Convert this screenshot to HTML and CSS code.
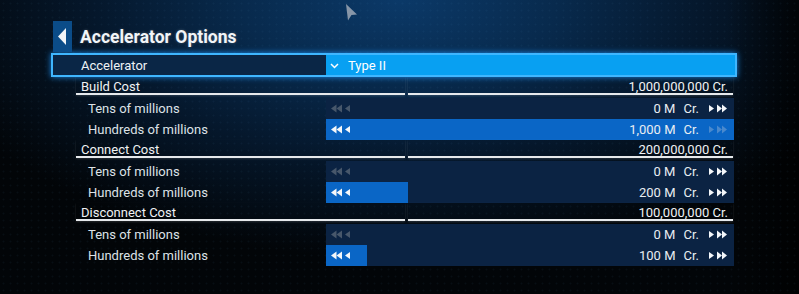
FILE: index.html
```html
<!DOCTYPE html>
<html lang="en">
<head>
    <meta charset="UTF-8">
    <title>Accelerator Options</title>
    <link rel="stylesheet" href="styles.css">
</head>
<body>
    <div class="screen">
        <svg class="cursor" width="12" height="17" viewBox="0 0 12 17">
            <polygon points="0,0 11,10.5 5.5,11 2,16.5" fill="#8796a8"/>
        </svg>

        <div class="panel">
            <div class="title-bar">
                <div class="back">
                    <svg width="9" height="17" viewBox="0 0 9 17"><polygon points="0,8.5 8,0 8,17" fill="#f2f5f8"/></svg>
                </div>
                <h1>Accelerator Options</h1>
            </div>

            <div class="select-row">
                <div class="select-label">Accelerator</div>
                <div class="select-value">
                    <svg width="9" height="6" viewBox="0 0 9 6"><polyline points="1,1 4.5,4.5 8,1" fill="none" stroke="#ffffff" stroke-width="1.5"/></svg>
                    <span>Type II</span>
                </div>
            </div>

            <!-- Build cost -->
            <div class="group">
                <div class="group-head">
                    <span class="head-label">Build Cost</span>
                    <span class="head-value">1,000,000,000 Cr.</span>
                </div>
                <div class="slider-row">
                    <div class="slider-label">Tens of millions</div>
                    <div class="slider" style="--fill: 0%">
                        <svg class="arrows dim" width="19" height="9" viewBox="0 0 19 9"><polygon points="0,4.5 5.5,0.5 5.5,8.5"/><polygon points="5.5,4.5 11,0.5 11,8.5"/><polygon points="14,4.5 19,1 19,8"/></svg>
                        <span class="value">0 M</span>
                        <span class="unit">Cr.</span>
                        <svg class="arrows" width="18" height="9" viewBox="0 0 18 9"><polygon points="0,1 5,4.5 0,8"/><polygon points="8,0.5 13,4.5 8,8.5"/><polygon points="13,0.5 18,4.5 13,8.5"/></svg>
                    </div>
                </div>
                <div class="slider-row">
                    <div class="slider-label">Hundreds of millions</div>
                    <div class="slider" style="--fill: 100%">
                        <svg class="arrows" width="19" height="9" viewBox="0 0 19 9"><polygon points="0,4.5 5.5,0.5 5.5,8.5"/><polygon points="5.5,4.5 11,0.5 11,8.5"/><polygon points="14,4.5 19,1 19,8"/></svg>
                        <span class="value">1,000 M</span>
                        <span class="unit">Cr.</span>
                        <svg class="arrows dim-on-fill" width="18" height="9" viewBox="0 0 18 9"><polygon points="0,1 5,4.5 0,8"/><polygon points="8,0.5 13,4.5 8,8.5"/><polygon points="13,0.5 18,4.5 13,8.5"/></svg>
                    </div>
                </div>
            </div>

            <!-- Connect cost -->
            <div class="group">
                <div class="group-head">
                    <span class="head-label">Connect Cost</span>
                    <span class="head-value">200,000,000 Cr.</span>
                </div>
                <div class="slider-row">
                    <div class="slider-label">Tens of millions</div>
                    <div class="slider" style="--fill: 0%">
                        <svg class="arrows dim" width="19" height="9" viewBox="0 0 19 9"><polygon points="0,4.5 5.5,0.5 5.5,8.5"/><polygon points="5.5,4.5 11,0.5 11,8.5"/><polygon points="14,4.5 19,1 19,8"/></svg>
                        <span class="value">0 M</span>
                        <span class="unit">Cr.</span>
                        <svg class="arrows" width="18" height="9" viewBox="0 0 18 9"><polygon points="0,1 5,4.5 0,8"/><polygon points="8,0.5 13,4.5 8,8.5"/><polygon points="13,0.5 18,4.5 13,8.5"/></svg>
                    </div>
                </div>
                <div class="slider-row">
                    <div class="slider-label">Hundreds of millions</div>
                    <div class="slider" style="--fill: 20%">
                        <svg class="arrows" width="19" height="9" viewBox="0 0 19 9"><polygon points="0,4.5 5.5,0.5 5.5,8.5"/><polygon points="5.5,4.5 11,0.5 11,8.5"/><polygon points="14,4.5 19,1 19,8"/></svg>
                        <span class="value">200 M</span>
                        <span class="unit">Cr.</span>
                        <svg class="arrows" width="18" height="9" viewBox="0 0 18 9"><polygon points="0,1 5,4.5 0,8"/><polygon points="8,0.5 13,4.5 8,8.5"/><polygon points="13,0.5 18,4.5 13,8.5"/></svg>
                    </div>
                </div>
            </div>

            <!-- Disconnect cost -->
            <div class="group">
                <div class="group-head">
                    <span class="head-label">Disconnect Cost</span>
                    <span class="head-value">100,000,000 Cr.</span>
                </div>
                <div class="slider-row">
                    <div class="slider-label">Tens of millions</div>
                    <div class="slider" style="--fill: 0%">
                        <svg class="arrows dim" width="19" height="9" viewBox="0 0 19 9"><polygon points="0,4.5 5.5,0.5 5.5,8.5"/><polygon points="5.5,4.5 11,0.5 11,8.5"/><polygon points="14,4.5 19,1 19,8"/></svg>
                        <span class="value">0 M</span>
                        <span class="unit">Cr.</span>
                        <svg class="arrows" width="18" height="9" viewBox="0 0 18 9"><polygon points="0,1 5,4.5 0,8"/><polygon points="8,0.5 13,4.5 8,8.5"/><polygon points="13,0.5 18,4.5 13,8.5"/></svg>
                    </div>
                </div>
                <div class="slider-row">
                    <div class="slider-label">Hundreds of millions</div>
                    <div class="slider" style="--fill: 10%">
                        <svg class="arrows" width="19" height="9" viewBox="0 0 19 9"><polygon points="0,4.5 5.5,0.5 5.5,8.5"/><polygon points="5.5,4.5 11,0.5 11,8.5"/><polygon points="14,4.5 19,1 19,8"/></svg>
                        <span class="value">100 M</span>
                        <span class="unit">Cr.</span>
                        <svg class="arrows" width="18" height="9" viewBox="0 0 18 9"><polygon points="0,1 5,4.5 0,8"/><polygon points="8,0.5 13,4.5 8,8.5"/><polygon points="13,0.5 18,4.5 13,8.5"/></svg>
                    </div>
                </div>
            </div>
        </div>
    </div>
</body>
</html>
```

FILE: styles.css
```css
* {
    margin: 0;
    padding: 0;
    box-sizing: border-box;
}

body {
    width: 799px;
    height: 294px;
    overflow: hidden;
    font-family: Roboto, 'Liberation Sans', sans-serif;
    font-size: 13px;
    color: #e6ebf0;
    background-color: #020509;
    background-image:
        radial-gradient(circle, rgba(90, 150, 210, 0.06) 0.7px, transparent 1.2px),
        linear-gradient(to right, rgba(0, 0, 0, 0) 91%, rgba(0, 0, 0, 0.75) 100%),
        radial-gradient(ellipse 70% 100% at 50% 0%, #0b3968 0%, #082a4d 28%, #05172b 55%, #020508 88%);
    background-size: 7px 7px, 100% 100%, 100% 100%;
}

.screen {
    position: relative;
    height: 294px;
    padding: 21px 0 0 51px;
}

.cursor {
    position: absolute;
    left: 346px;
    top: 4px;
}

.panel {
    width: 686px;
}

.title-bar {
    display: flex;
    align-items: center;
    height: 32px;
}

.back {
    width: 19px;
    height: 31px;
    margin-left: 2px;
    margin-bottom: 1px;
    background: #0b4c88;
    display: flex;
    align-items: center;
    justify-content: center;
}

h1 {
    margin-left: 8px;
    font-size: 17.5px;
    font-weight: 700;
    color: #f2f5f8;
    text-shadow: 0 0 3px rgba(255, 255, 255, 0.25);
}

/* Dropdown row */
.select-row {
    display: flex;
    height: 24px;
    border: 2px solid #3fb6ff;
    box-shadow: 0 0 6px rgba(30, 150, 255, 0.85), inset 0 0 3px rgba(30, 150, 255, 0.6);
}

.select-label {
    width: 273px;
    padding-left: 28px;
    line-height: 21px;
    background: #0a2646;
    color: #eef2f6;
}

.select-value {
    flex: 1;
    display: flex;
    align-items: center;
    gap: 9px;
    padding: 1px 0 0 4px;
    background: #08a0f2;
    color: #ffffff;
}

/* Cost groups */
.group-head {
    display: flex;
    gap: 3px;
    width: 657px;
    height: 18px;
    margin: 0 0 3px 25px;
    color: #f0f2f4;
}

.head-label,
.head-value {
    border-bottom: 2px solid #e6e9ec;
    padding-top: 4px;
    line-height: 12px;
    box-shadow: 0 1px 2px rgba(255, 255, 255, 0.15);
}

.head-label {
    width: 329px;
    padding-left: 5px;
}

.head-value {
    flex: 1;
    text-align: right;
    padding-right: 5px;
}

.slider-row {
    display: grid;
    grid-template-columns: 275px 408px;
    height: 20px;
    margin-bottom: 1px;
}

.slider-label {
    padding-left: 37px;
    line-height: 21px;
    color: #dde2e7;
}

.slider {
    display: flex;
    align-items: center;
    padding: 0 7px 0 5px;
    line-height: 21px;
    color: #e8edf2;
    background: linear-gradient(to right, #0a66c6 var(--fill), #0b2343 var(--fill));
}

.arrows {
    fill: #f4f7fa;
}

.arrows.dim {
    fill: #47576b;
}

.arrows.dim-on-fill {
    fill: rgba(150, 180, 215, 0.45);
}

.slider .arrows:first-child {
    margin-right: auto;
}

.unit {
    margin-left: 8px;
}

.unit + .arrows {
    margin-left: 10px;
}
```
